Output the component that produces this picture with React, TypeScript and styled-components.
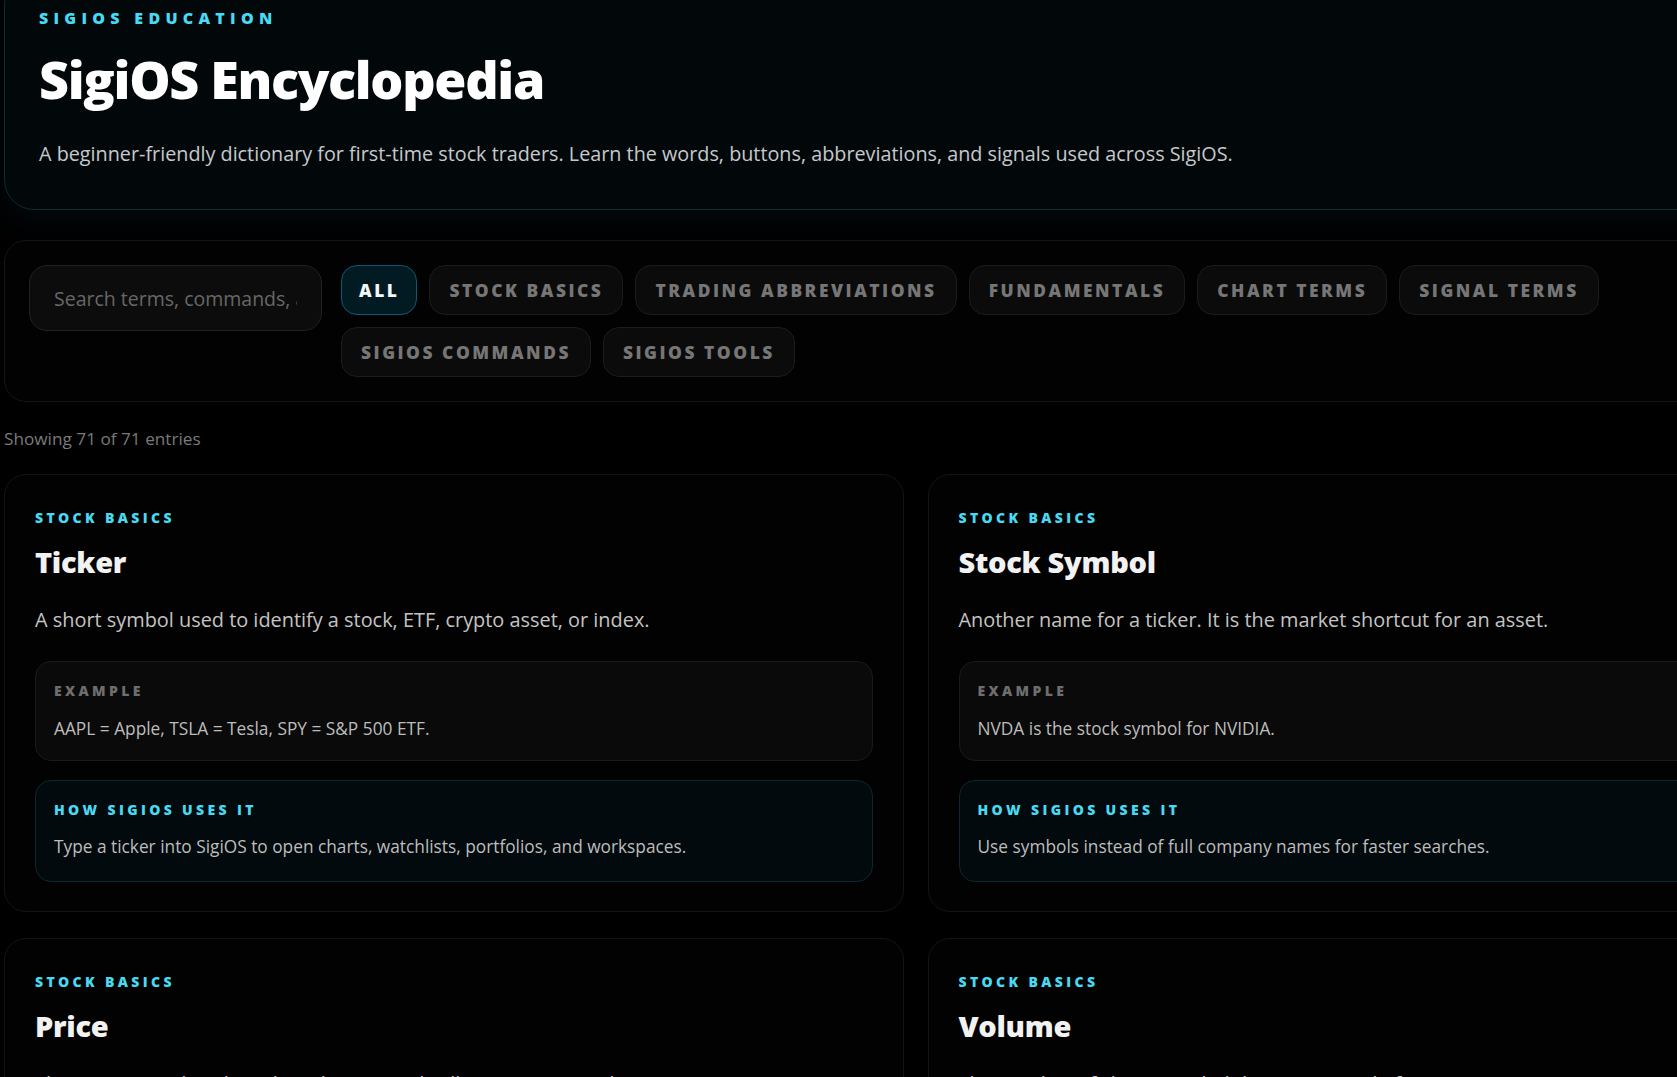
import styled, { createGlobalStyle } from 'styled-components';

const GlobalStyle = createGlobalStyle`
  html, body {
    margin: 0;
    padding: 0;
    background: #000;
    overflow: hidden;
  }
  body {
    font-family: "Open Sans", "Noto Sans", sans-serif;
    color: #e8e8e8;
  }
  * {
    box-sizing: border-box;
  }
`;

const Page = styled.main`
  width: 1823px;
  margin: -26px 0 0 4px;
  display: flex;
  flex-direction: column;
`;

const Hero = styled.header`
  padding: 34px 34px 41px;
  border: 1px solid #0c2b33;
  border-radius: 30px;
  background: #02080a;
  box-shadow: 0 12px 34px rgba(6, 30, 36, 0.35);
`;

const Eyebrow = styled.div<{ $size?: number; $muted?: boolean }>`
  font-size: ${(p) => p.$size ?? 14}px;
  font-weight: 800;
  letter-spacing: 0.24em;
  text-transform: uppercase;
  line-height: 1.2;
  color: ${(p) => (p.$muted ? '#6e6e6e' : '#48daf3')};
`;

const HeroEyebrow = styled(Eyebrow)`
  letter-spacing: 0.33em;
`;

const HeroTitle = styled.h1`
  margin: 22px 0 0;
  font-size: 52px;
  font-weight: 800;
  letter-spacing: -0.025em;
  line-height: 1.1;
  color: #fff;
`;

const HeroText = styled.p`
  margin: 33px 0 0;
  font-size: 19.8px;
  line-height: 1.4;
  color: #c6c9cc;
`;

const FilterPanel = styled.section`
  margin-top: 30px;
  padding: 24px;
  display: flex;
  align-items: flex-start;
  gap: 19px;
  border: 1px solid #151515;
  border-radius: 22px;
  background: #020202;
`;

const Search = styled.input`
  flex: 0 0 auto;
  width: 293px;
  min-width: 0;
  height: 66px;
  padding: 0 24px;
  border: 1px solid #222;
  border-radius: 18px;
  background: #0c0c0c;
  color: #ddd;
  font-family: inherit;
  font-size: 19.5px;
  outline: none;
  &::placeholder {
    color: #676767;
  }
`;

const Chips = styled.div`
  flex: 1;
  display: flex;
  flex-wrap: wrap;
  gap: 12px;
`;

const Chip = styled.button<{ $active?: boolean }>`
  height: 50px;
  padding: 0 ${(p) => (p.$active ? 17 : 19)}px;
  border-radius: 16px;
  border: 1px solid ${(p) => (p.$active ? '#0e5874' : '#1c1c1c')};
  background: ${(p) => (p.$active ? '#021a21' : '#0b0b0b')};
  color: ${(p) => (p.$active ? '#f2f7f8' : '#767676')};
  font-family: inherit;
  font-size: 17.4px;
  font-weight: 800;
  letter-spacing: 0.145em;
  text-transform: uppercase;
  cursor: pointer;
`;

const Count = styled.div`
  margin: 26px 0 0;
  font-size: 17.2px;
  line-height: 1.3;
  color: #7a7a7a;
`;

const Grid = styled.div`
  margin-top: 24px;
  display: grid;
  grid-template-columns: 1fr 1fr;
  gap: 26px 24px;
`;

const Card = styled.article`
  padding: 35px 30px 29px;
  border: 1px solid #141414;
  border-radius: 22px;
  background: #020202;
  display: flex;
  flex-direction: column;
`;

const Term = styled.h2`
  margin: 18px 0 0;
  font-size: 29px;
  font-weight: 800;
  letter-spacing: -0.01em;
  line-height: 1.2;
  color: #f2f2f2;
`;

const Definition = styled.p`
  margin: 26px 0 0;
  font-size: 19.9px;
  line-height: 1.4;
  color: #c4c4c4;
`;

const InfoBox = styled.div<{ $tone: 'plain' | 'accent' }>`
  margin-top: ${(p) => (p.$tone === 'plain' ? 27 : 19)}px;
  padding: 21px 18px ${(p) => (p.$tone === 'plain' ? 18 : 21)}px;
  border-radius: 16px;
  border: 1px solid ${(p) => (p.$tone === 'plain' ? '#1a1a1a' : '#0b2830')};
  background: ${(p) => (p.$tone === 'plain' ? '#0a0a0a' : '#020a0d')};
`;

const InfoText = styled.p`
  margin: 16px 0 0;
  font-size: 17.3px;
  line-height: 1.5;
  color: #bdbdbd;
`;

const categories = [
  'All',
  'Stock Basics',
  'Trading Abbreviations',
  'Fundamentals',
  'Chart Terms',
  'Signal Terms',
  'SigiOS Commands',
  'SigiOS Tools',
];

const entries = [
  {
    category: 'Stock Basics',
    term: 'Ticker',
    definition: 'A short symbol used to identify a stock, ETF, crypto asset, or index.',
    example: 'AAPL = Apple, TSLA = Tesla, SPY = S&P 500 ETF.',
    usage: 'Type a ticker into SigiOS to open charts, watchlists, portfolios, and workspaces.',
  },
  {
    category: 'Stock Basics',
    term: 'Stock Symbol',
    definition: 'Another name for a ticker. It is the market shortcut for an asset.',
    example: 'NVDA is the stock symbol for NVIDIA.',
    usage: 'Use symbols instead of full company names for faster searches.',
  },
  {
    category: 'Stock Basics',
    term: 'Price',
    definition: 'The current trade value where buyers and sellers agree to trade.',
    example: 'If AAPL shows $190, that is the latest traded price.',
    usage: 'SigiOS shows live price on charts, tickers, and watchlists.',
  },
  {
    category: 'Stock Basics',
    term: 'Volume',
    definition: 'The number of shares traded during a period of time.',
    example: 'High volume means many shares changed hands today.',
    usage: 'Volume bars appear under charts to confirm moves.',
  },
];

export default function App() {
  return (
    <>
      <GlobalStyle />
      <Page>
        <Hero>
          <HeroEyebrow $size={16}>SigiOS Education</HeroEyebrow>
          <HeroTitle>SigiOS Encyclopedia</HeroTitle>
          <HeroText>
            A beginner-friendly dictionary for first-time stock traders. Learn the words, buttons,
            abbreviations, and signals used across SigiOS.
          </HeroText>
        </Hero>

        <FilterPanel>
          <Search placeholder="Search terms, commands, abbreviations..." />
          <Chips>
            {categories.map((c, i) => (
              <Chip key={c} $active={i === 0}>
                {c}
              </Chip>
            ))}
          </Chips>
        </FilterPanel>

        <Count>Showing 71 of 71 entries</Count>

        <Grid>
          {entries.map((e) => (
            <Card key={e.term}>
              <Eyebrow>{e.category}</Eyebrow>
              <Term>{e.term}</Term>
              <Definition>{e.definition}</Definition>
              <InfoBox $tone="plain">
                <Eyebrow $muted>Example</Eyebrow>
                <InfoText>{e.example}</InfoText>
              </InfoBox>
              <InfoBox $tone="accent">
                <Eyebrow>How SigiOS uses it</Eyebrow>
                <InfoText>{e.usage}</InfoText>
              </InfoBox>
            </Card>
          ))}
        </Grid>
      </Page>
    </>
  );
}
